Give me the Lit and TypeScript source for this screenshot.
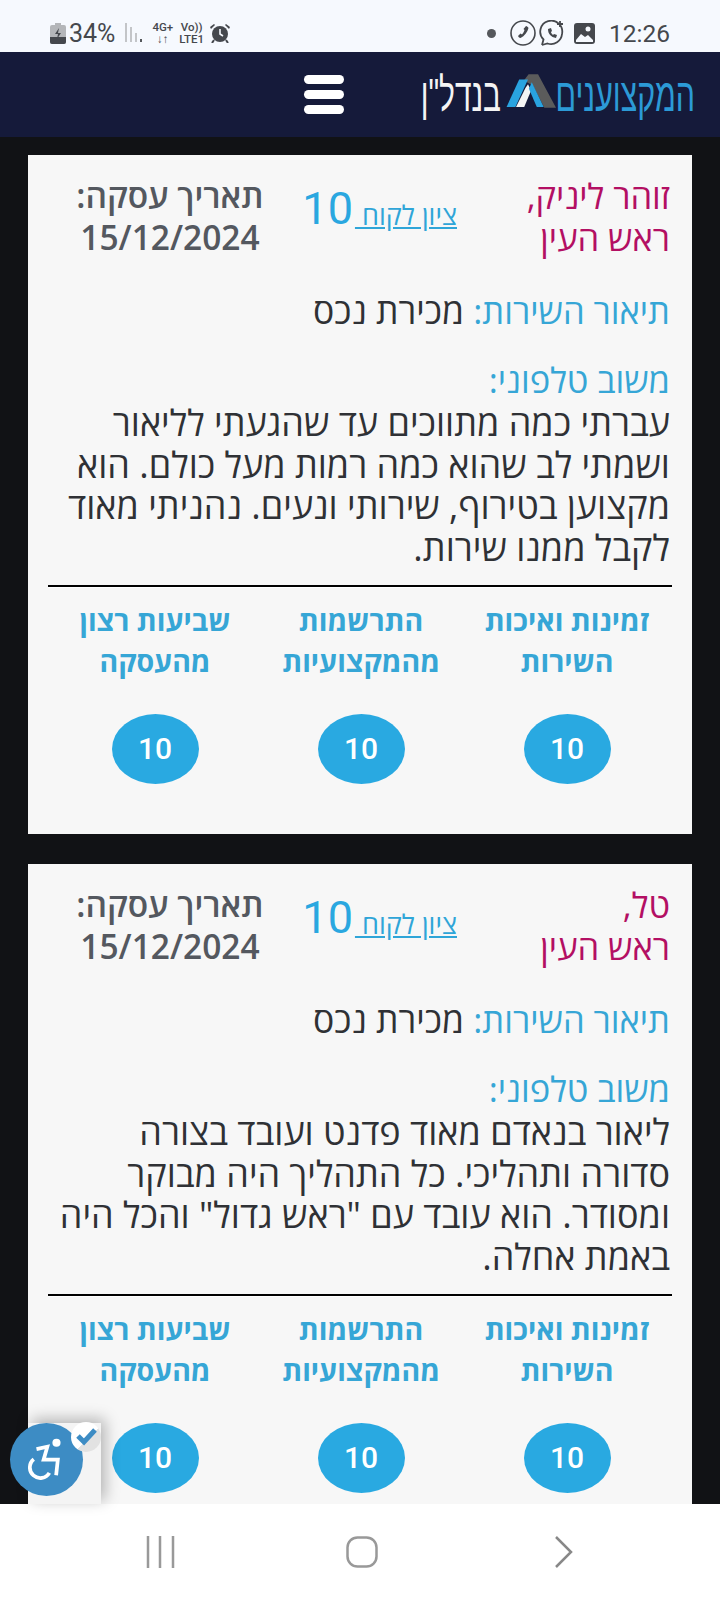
import { LitElement, html, css } from "lit";
import { customElement } from "lit/decorators.js";

const reviews = [
  {
    name: "זוהר ליניק,",
    city: "ראש העין",
    text: "עברתי כמה מתווכים עד שהגעתי לליאור ושמתי לב שהוא כמה רמות מעל כולם. הוא מקצוען בטירוף, שירותי ונעים. נהניתי מאוד לקבל ממנו שירות.",
  },
  {
    name: "טל,",
    city: "ראש העין",
    text: 'ליאור בנאדם מאוד פדנט ועובד בצורה סדורה ותהליכי. כל התהליך היה מבוקר ומסודר. הוא עובד עם "ראש גדול" והכל היה באמת אחלה.',
  },
];

const ratings = [
  ["זמינות ואיכות", "השירות"],
  ["התרשמות", "מהמקצועיות"],
  ["שביעות רצון", "מהעסקה"],
];

@customElement("app-root")
export class AppRoot extends LitElement {
  static styles = css`
    :host {
      display: flex;
      flex-direction: column;
      position: relative;
      width: 720px;
      height: 1600px;
      overflow: hidden;
      background: #111215;
      font-family: "Open Sans", "Liberation Sans", sans-serif;
    }

    /* status bar */
    .status {
      height: 52px;
      flex: none;
      background: #f6f9fe;
      display: flex;
      justify-content: space-between;
      align-items: center;
      padding: 14px 50px 0 49px;
      color: #45484d;
      font-family: Roboto, sans-serif;
      font-size: 25px;
      box-sizing: border-box;
    }
    .status-side {
      display: flex;
      align-items: center;
    }
    .status svg {
      display: block;
    }
    .pct {
      margin: 0 9px 0 2px;
    }
    .sig {
      margin-right: 10px;
    }
    .net {
      font-size: 11.5px;
      font-weight: 500;
      line-height: 12px;
      text-align: center;
      margin-right: 6px;
    }
    .dot {
      margin-right: 14px;
    }
    .ico-phone {
      margin-right: 3px;
    }
    .ico-chat {
      margin-right: 9px;
    }
    .time {
      margin-left: 14px;
      font-size: 24.5px;
    }

    /* site header */
    .header {
      height: 85px;
      flex: none;
      background: #151a3a;
      display: flex;
      direction: rtl;
      align-items: center;
      padding-right: 25px;
      gap: 77px;
      box-sizing: border-box;
    }
    .logo {
      width: 274px;
      height: 48px;
      display: flex;
      align-items: center;
      gap: 4px;
      flex: none;
    }
    .logo svg {
      margin-bottom: 8px;
    }
    .logo-text {
      font-family: "Liberation Sans", sans-serif;
      font-size: 46px;
      line-height: 48px;
      white-space: nowrap;
      transform-origin: right center;
    }
    .logo-blue {
      color: #2c9ad6;
      width: 135px;
      flex: none;
      transform: scaleX(0.66);
    }
    .logo-white {
      color: #f4f4f4;
      width: 80px;
      flex: none;
      transform: scaleX(0.65);
    }
    .burger {
      width: 40px;
      flex: none;
      display: flex;
      flex-direction: column;
      gap: 6px;
    }
    .burger span {
      height: 9px;
      border-radius: 5px;
      background: #fff;
    }

    /* reviews */
    .content {
      flex: 1;
      min-height: 0;
      overflow: hidden;
      padding: 18px 28px 0;
      display: flex;
      flex-direction: column;
      gap: 30px;
      direction: rtl;
    }
    .card {
      flex: none;
      height: 679px;
      box-sizing: border-box;
      background: #f7f7f7;
      padding: 20px 22px 0 20px;
      color: #2f3135;
      font-size: 36px;
      line-height: 41.5px;
    }
    .top {
      display: grid;
      grid-template-columns: 213px 165px 244px;
      height: 84px;
    }
    .who {
      color: #b30f63;
      font-size: 34.5px;
      white-space: nowrap;
    }
    .score {
      display: flex;
      align-items: center;
      gap: 2px;
      height: 68px;
    }
    .score a {
      color: #2fa5d8;
      font-size: 27px;
      text-decoration: underline;
      line-height: 30px;
      margin-top: 12px;
      white-space: nowrap;
    }
    .score b {
      color: #2aa7e0;
      font-family: Roboto, sans-serif;
      font-weight: 400;
      font-size: 45px;
      line-height: 60px;
    }
    .date {
      color: #54585f;
      font-size: 33.5px;
      font-weight: 600;
      text-align: center;
      white-space: nowrap;
    }
    .row {
      margin-top: 31px;
      font-size: 35.5px;
    }
    .label {
      color: #36a6d6;
      font-size: 34.5px;
    }
    .phone {
      margin-top: 27px;
    }
    .body {
      margin-top: 2px;
    }
    hr {
      border: 0;
      height: 2px;
      background: #000;
      margin: 17px -2px 0 0;
      box-shadow: 0 1px 0 #fff;
    }
    .scores {
      display: grid;
      grid-template-columns: repeat(3, 206px);
      margin-top: 13px;
    }
    .cell {
      text-align: center;
      display: flex;
      flex-direction: column;
      align-items: center;
    }
    .cell-title {
      color: #36a6d6;
      font-size: 28.5px;
      font-weight: 700;
      line-height: 41px;
      white-space: nowrap;
    }
    .circle {
      margin-top: 32px;
      width: 87px;
      height: 70px;
      border-radius: 50%;
      background: #29a9e1;
      color: #fff;
      font-family: Roboto, sans-serif;
      font-size: 30px;
      font-weight: 500;
      display: flex;
      align-items: center;
      justify-content: center;
    }

    /* system nav */
    .sysnav {
      height: 96px;
      flex: none;
      background: #fff;
      display: grid;
      grid-template-columns: repeat(3, 201px);
      justify-items: center;
      padding: 32px 0 0 60px;
      box-sizing: border-box;
    }
    .sysnav svg {
      display: block;
    }

    /* accessibility widget */
    .a11y {
      position: absolute;
      left: 28px;
      top: 1423px;
      width: 73px;
      height: 81px;
      background: #f4f4f4;
      box-shadow: 4px -4px 14px rgba(0, 0, 0, 0.28);
    }
    .a11y-icon {
      position: absolute;
      left: -18px;
      top: 0;
      width: 73px;
      height: 73px;
      border-radius: 50%;
      background: #3d8cc4;
      display: flex;
      align-items: center;
      justify-content: center;
    }
    .a11y-icon svg {
      display: block;
      flex: none;
    }
    .a11y-check {
      position: absolute;
      left: 43px;
      top: -1px;
      width: 30px;
      height: 30px;
      border-radius: 50%;
      background: linear-gradient(135deg, #fff 55%, #e2e2e2 55%);
    }
  `;

  renderCard(r: { name: string; city: string; text: string }) {
    return html`<section class="card">
      <div class="top">
        <div class="who">${r.name}<br />${r.city}</div>
        <div class="score"><a href="#">ציון לקוח&nbsp;</a><b>10</b></div>
        <div class="date">תאריך עסקה:<br />15/12/2024</div>
      </div>
      <div class="row"><span class="label">תיאור השירות:</span> מכירת נכס</div>
      <div class="phone label">משוב טלפוני:</div>
      <div class="body">${r.text}</div>
      <hr />
      <div class="scores">
        ${ratings.map(
          (t) => html`<div class="cell">
            <div class="cell-title">${t[0]}<br />${t[1]}</div>
            <div class="circle">10</div>
          </div>`
        )}
      </div>
    </section>`;
  }

  render() {
    return html`
      <div class="status">
        <div class="status-side">
          <svg width="18" height="21" viewBox="0 0 18 21">
            <path d="M6 0h6v2h3a2 2 0 0 1 2 2v15a2 2 0 0 1-2 2H3a2 2 0 0 1-2-2V4a2 2 0 0 1 2-2h3z" fill="#b4b6b9" />
            <path d="M1 14h16v5a2 2 0 0 1-2 2H3a2 2 0 0 1-2-2z" fill="#45484d" />
            <path d="M10 5l-4 6h3l-1 5 4-6H9z" fill="#45484d" />
          </svg>
          <span class="pct">34%</span>
          <svg class="sig" width="18" height="20" viewBox="0 0 18 20">
            <path d="M1 0h2v19H1z" fill="#c3c5c8" />
            <path d="M6 4h2v15H6z" fill="#c3c5c8" />
            <path d="M11 10h2v9h-2z" fill="#c3c5c8" />
            <path d="M16 16h2v3h-2z" fill="#55585c" />
          </svg>
          <div class="net">4G+<br />↓↑</div>
          <div class="net">Vo))<br />LTE1</div>
          <svg width="20" height="20" viewBox="0 0 20 20">
            <circle cx="10" cy="11" r="8" fill="#45484d" />
            <path d="M10 6v5l3 2" stroke="#f6f9fe" stroke-width="1.6" fill="none" />
            <path d="M0 4l4-3 1 1-4 4zM20 4l-4-3-1 1 4 4z" fill="#45484d" />
            <path d="M4 17l-2 3M16 17l2 3" stroke="#45484d" stroke-width="2" />
          </svg>
        </div>
        <div class="status-side">
          <svg class="dot" width="9" height="9" viewBox="0 0 8 8">
            <circle cx="4" cy="4" r="4" fill="#55585c" />
          </svg>
          <svg class="ico-phone" width="26" height="26" viewBox="0 0 26 26">
            <circle cx="13" cy="13" r="12" fill="none" stroke="#45484d" stroke-width="1.6" />
            <path d="M16 6c1 0 2 1 2.500 2-1 4-4 8-8 10-1 0-2-1-2.500-2l2.500-2.500 1.500 1c1-1 2-3 2.500-4.500l-1-1z" fill="#45484d" />
          </svg>
          <svg class="ico-chat" width="26" height="26" viewBox="0 0 26 26">
            <path d="M3 25l1.500-5.500A11 11 0 1 1 23 14" fill="none" stroke="#45484d" stroke-width="1.800" />
            <path d="M3 25l5.500-1.500A11 11 0 0 0 23 14" fill="none" stroke="#45484d" stroke-width="1.800" />
            <path d="M9 9c0 5 3 8 8 9l1-3-3-1-1 1c-1-1-2-2-2-3l1-1-1-3z" fill="#45484d" />
            <path d="M21 1v6M18 4h6" stroke="#45484d" stroke-width="1.800" />
          </svg>
          <svg width="21" height="21" viewBox="0 0 21 21">
            <rect width="21" height="21" rx="3" fill="#45484d" />
            <path d="M2 17l5-6 4 3 3-2 5 5v2H2z" fill="#f6f9fe" />
            <circle cx="14" cy="6" r="2.500" fill="#f6f9fe" />
          </svg>
          <span class="time">12:26</span>
        </div>
      </div>

      <header class="header">
        <div class="logo">
          <div class="logo-text logo-blue">המקצוענים</div>
          <svg width="51" height="36" viewBox="100 215 162 113">
            <path d="M160 238l15-20h30l57 107h-37l-36-70z" fill="#5b5b5b" />
            <path d="M105 322l40-87h28l-40 87z" fill="#29a3e0" />
            <path d="M135 322l30-60 8-12 10 20-22 52z" fill="#f4f4f4" />
            <path d="M185 244l38 78h-22l-25-58z" fill="#29a3e0" />
          </svg>
          <div class="logo-text logo-white">בנדל"ן</div>
        </div>
        <div class="burger"><span></span><span></span><span></span></div>
      </header>

      <main class="content">${reviews.map((r) => this.renderCard(r))}</main>

      <nav class="sysnav">
        <svg width="30" height="32" viewBox="0 0 30 32">
          <path d="M2 0v32M14 0v32M27 0v32" stroke="#999" stroke-width="2.500" />
        </svg>
        <svg width="32" height="32" viewBox="0 0 32 32">
          <rect x="1.500" y="1.500" width="29" height="29" rx="10" fill="none" stroke="#999" stroke-width="2.500" />
        </svg>
        <svg width="20" height="32" viewBox="0 0 20 32">
          <path d="M3 1l15 15L3 31" fill="none" stroke="#888" stroke-width="2.500" />
        </svg>
      </nav>

      <div class="a11y">
        <div class="a11y-icon">
          <svg width="38" height="44" viewBox="90 85 110 130">
            <circle cx="173" cy="99" r="12" fill="#fff" />
            <path d="M114 118l32-7-11 38h42l-5 46" fill="none" stroke="#fff" stroke-width="11" />
            <path d="M106 148a31 31 0 1 0 46 40" fill="none" stroke="#fff" stroke-width="11" />
          </svg>
        </div>
        <div class="a11y-check">
          <svg width="30" height="30" viewBox="0 0 30 30">
            <path d="M7 14l6 6 11-12" fill="none" stroke="#3d8cc4" stroke-width="5" />
          </svg>
        </div>
      </div>
    `;
  }
}
